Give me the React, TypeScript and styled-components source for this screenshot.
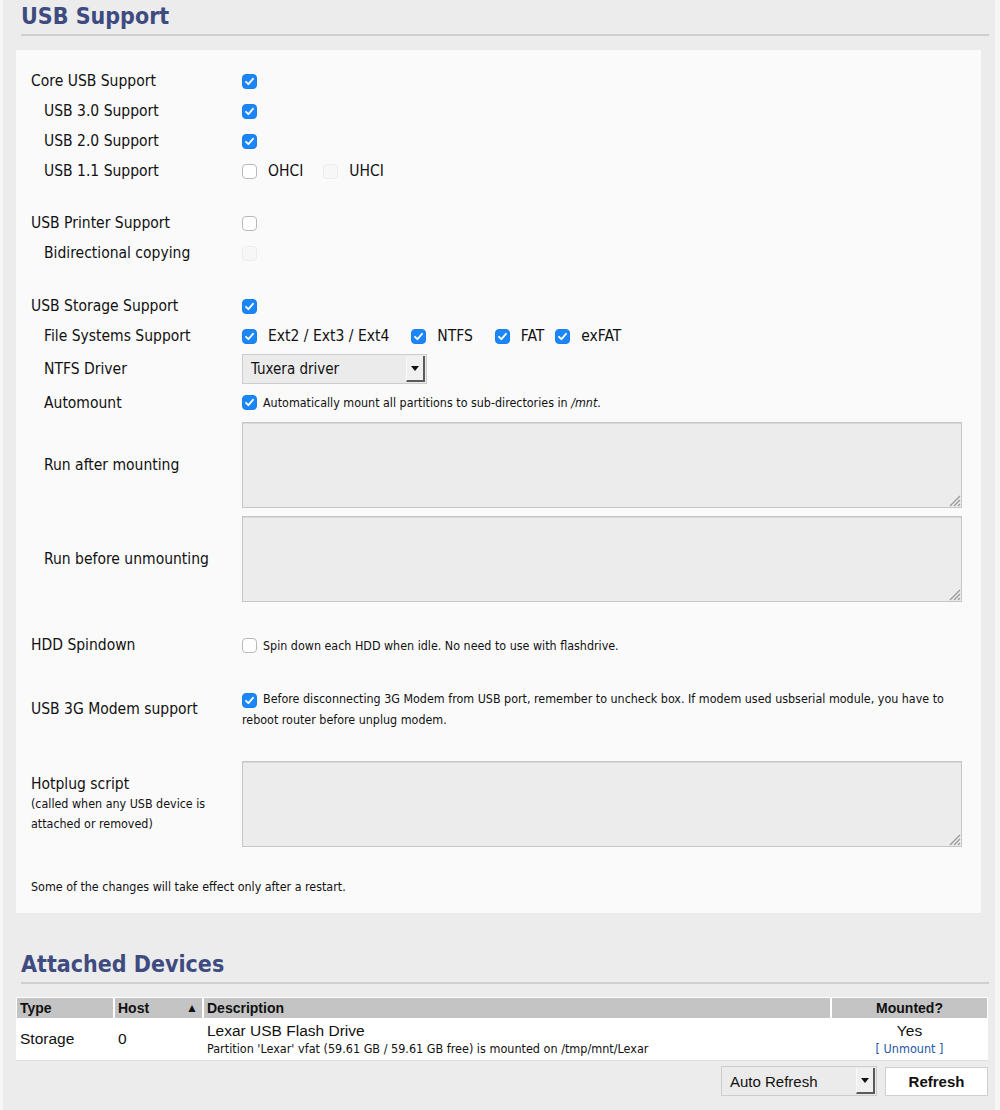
import React from 'react';
import styled, { createGlobalStyle } from 'styled-components';

const Global = createGlobalStyle`
  html, body { margin: 0; padding: 0; background: #f6f6f6; }
  body { font-family: "DejaVu Sans Condensed", "Liberation Sans", sans-serif; color: #111; }
`;

const Page = styled.div`
  margin-left: 3px;
  width: 992px;
  min-height: 1110px;
  background: #ececec;
  overflow: hidden;
`;

const SectionTitle = styled.h2<{ $top: number }>`
  margin: ${(p) => p.$top}px 6px 0 18px;
  padding: 1px 0 3px 0;
  font-family: "DejaVu Sans Condensed", "Liberation Sans", sans-serif;
  font-weight: bold;
  font-size: 23px;
  line-height: 30px;
  color: #3e4b80;
  border-bottom: 2px solid #cfcfcf;
`;

const Panel = styled.div`
  margin: 14px 0 0 13px;
  width: 965px;
  box-sizing: border-box;
  background: #fafafa;
  padding: 16px 0 16px 15px;
`;

const Row = styled.div<{ $h: number; $gap?: number }>`
  display: grid;
  grid-template-columns: 211px 720px;
  align-items: center;
  height: ${(p) => p.$h}px;
  margin-top: ${(p) => p.$gap ?? 0}px;
`;

const Label = styled.div<{ $indent?: boolean }>`
  padding-left: ${(p) => (p.$indent ? 13 : 0)}px;
  font-size: 15.5px;
  line-height: 20px;
`;

const SmallNote = styled.div<{ $span?: boolean }>`
  font-size: 12.4px;
  line-height: 20px;
  grid-column: ${(p) => (p.$span ? '1 / span 2' : 'auto')};
`;

const Value = styled.div`
  display: flex;
  align-items: center;
`;

const Box = styled.span<{ $state: 'on' | 'off' | 'disabled' }>`
  display: inline-flex;
  align-items: center;
  justify-content: center;
  flex: none;
  width: 15px;
  height: 15px;
  box-sizing: border-box;
  border-radius: 4px;
  vertical-align: -3px;
  background: ${(p) => (p.$state === 'on' ? '#1b86f8' : p.$state === 'off' ? '#ffffff' : '#f7f7f7')};
  border: 1px solid ${(p) => (p.$state === 'on' ? '#1a7fee' : p.$state === 'off' ? '#b9b9b9' : '#ececec')};
`;

const Check = ({ on = true, disabled = false }: { on?: boolean; disabled?: boolean }) => (
  <Box $state={on ? 'on' : disabled ? 'disabled' : 'off'}>
    {on && (
      <svg width="11" height="11" viewBox="0 0 11 11">
        <path d="M2 5.8 L4.4 8.2 L9 2.8" stroke="#fff" strokeWidth="1.8" fill="none" strokeLinecap="round" strokeLinejoin="round" />
      </svg>
    )}
  </Box>
);

const Options = styled.div`
  display: flex;
  align-items: center;
`;

const Opt = styled.span<{ $gap?: number }>`
  display: inline-flex;
  align-items: center;
  gap: 11px;
  margin-right: ${(p) => p.$gap ?? 22}px;
  font-size: 15.5px;
`;

const SmallText = styled.span`
  font-size: 12.4px;
  line-height: 21px;
  margin-left: 6px;
`;

const Wrapped = styled.div`
  font-size: 12.4px;
  line-height: 21px;
  width: 716px;
`;

const SelectBox = styled.div<{ $w: number; $font?: string }>`
  display: flex;
  align-items: stretch;
  width: ${(p) => p.$w}px;
  height: 30px;
  box-sizing: border-box;
  background: #ebebeb;
  border: 1px solid #cdcdcd;
  font-family: ${(p) => p.$font ?? 'inherit'};
`;

const SelectText = styled.span`
  flex: 1;
  display: flex;
  align-items: center;
  padding-left: 8px;
  font-size: 15px;
`;

const ArrowBtn = styled.span`
  width: 19px;
  margin: 1px 1px 1px 0;
  box-sizing: border-box;
  display: flex;
  align-items: center;
  justify-content: center;
  background: #f0f0f0;
  border-left: 1px solid #fafafa;
  border-right: 2px solid #5a5a5a;
  border-bottom: 2px solid #5a5a5a;
  &::after {
    content: '';
    border-left: 4px solid transparent;
    border-right: 4px solid transparent;
    border-top: 5px solid #111;
  }
`;

const AreaWrap = styled.div`
  position: relative;
  width: 720px;
  height: 86px;
`;

const TextArea = styled.textarea`
  display: block;
  width: 720px;
  height: 86px;
  box-sizing: border-box;
  background: #ececec;
  border: 1px solid #c6c6c6;
  box-shadow: inset 0 1px 0 #d8d8d8;
  margin: 0;
  resize: none;
`;

const Grip = styled.svg`
  position: absolute;
  right: 1px;
  bottom: 1px;
  pointer-events: none;
`;

const Area = () => (
  <AreaWrap>
    <TextArea defaultValue="" />
    <Grip width="13" height="13" viewBox="0 0 13 13">
      <path d="M12 2 L2 12 M12 6 L6 12 M12 10 L10 12" stroke="#9a9a9a" strokeWidth="1.3" />
    </Grip>
  </AreaWrap>
);

const DevTable = styled.div`
  margin: 13px 0 0 13px;
  width: 972px;
  box-sizing: border-box;
  padding: 1px;
  background: #ffffff;
  box-shadow: 0 1px 0 #dedede;
  display: grid;
  grid-template-columns: 96px 87px 626px 155px;
  column-gap: 2px;
  row-gap: 1px;
  font-family: "Liberation Sans", Arial, sans-serif;
`;

const Th = styled.div<{ $center?: boolean }>`
  height: 20px;
  background: #c4c4c4;
  font-weight: bold;
  font-size: 14px;
  line-height: 20px;
  padding: 0 3px;
  display: flex;
  justify-content: ${(p) => (p.$center ? 'center' : 'space-between')};
`;

const SortMark = styled.span`
  font-size: 12px;
  padding-right: 1px;
`;

const Td = styled.div<{ $center?: boolean }>`
  height: 40px;
  display: flex;
  flex-direction: column;
  justify-content: center;
  align-items: ${(p) => (p.$center ? 'center' : 'flex-start')};
  padding: 0 3px;
  font-size: 15.5px;
`;

const DevName = styled.div`
  font-size: 15.5px;
  line-height: 19px;
`;

const DevSub = styled.div`
  font-family: "DejaVu Sans Condensed", "Liberation Sans", sans-serif;
  font-size: 12.5px;
  line-height: 17px;
`;

const Unmount = styled.a`
  font-family: "DejaVu Sans Condensed", "Liberation Sans", sans-serif;
  font-size: 12.5px;
  line-height: 17px;
  color: #2455a8;
  text-decoration: none;
`;

const Controls = styled.div`
  display: flex;
  justify-content: flex-end;
  align-items: flex-start;
  gap: 8px;
  margin: 6px 7px 0 0;
  font-family: "Liberation Sans", Arial, sans-serif;
`;

const Button = styled.button`
  width: 103px;
  height: 29px;
  margin-top: 1px;
  background: #ffffff;
  border: 1px solid #cfcfcf;
  font-family: "Liberation Sans", Arial, sans-serif;
  font-weight: bold;
  font-size: 15px;
  color: #111;
  padding: 0;
`;

export default function App() {
  return (
    <Page>
      <Global />
      <SectionTitle $top={0}>USB Support</SectionTitle>
      <Panel>
        <Row $h={30}>
          <Label>Core USB Support</Label>
          <Value><Check /></Value>
        </Row>
        <Row $h={30}>
          <Label $indent>USB 3.0 Support</Label>
          <Value><Check /></Value>
        </Row>
        <Row $h={30}>
          <Label $indent>USB 2.0 Support</Label>
          <Value><Check /></Value>
        </Row>
        <Row $h={30}>
          <Label $indent>USB 1.1 Support</Label>
          <Options>
            <Opt $gap={20}><Check on={false} />OHCI</Opt>
            <Opt><Check on={false} disabled />UHCI</Opt>
          </Options>
        </Row>

        <Row $h={30} $gap={22}>
          <Label>USB Printer Support</Label>
          <Value><Check on={false} /></Value>
        </Row>
        <Row $h={30}>
          <Label $indent>Bidirectional copying</Label>
          <Value><Check on={false} disabled /></Value>
        </Row>

        <Row $h={30} $gap={23}>
          <Label>USB Storage Support</Label>
          <Value><Check /></Value>
        </Row>
        <Row $h={30}>
          <Label $indent>File Systems Support</Label>
          <Options>
            <Opt><Check />Ext2 / Ext3 / Ext4</Opt>
            <Opt><Check />NTFS</Opt>
            <Opt $gap={11}><Check />FAT</Opt>
            <Opt><Check />exFAT</Opt>
          </Options>
        </Row>
        <Row $h={36}>
          <Label $indent>NTFS Driver</Label>
          <Value>
            <SelectBox $w={185}>
              <SelectText>Tuxera driver</SelectText>
              <ArrowBtn />
            </SelectBox>
          </Value>
        </Row>
        <Row $h={31}>
          <Label $indent>Automount</Label>
          <Value>
            <Check />
            <SmallText>Automatically mount all partitions to sub-directories in <i>/mnt</i>.</SmallText>
          </Value>
        </Row>
        <Row $h={94}>
          <Label $indent>Run after mounting</Label>
          <Value><Area /></Value>
        </Row>
        <Row $h={94}>
          <Label $indent>Run before unmounting</Label>
          <Value><Area /></Value>
        </Row>

        <Row $h={30} $gap={24}>
          <Label>HDD Spindown</Label>
          <Value>
            <Check on={false} />
            <SmallText>Spin down each HDD when idle. No need to use with flashdrive.</SmallText>
          </Value>
        </Row>

        <Row $h={42} $gap={28}>
          <Label>USB 3G Modem support</Label>
          <Wrapped>
            <Check />
            <SmallText>
              Before disconnecting 3G Modem from USB port, remember to uncheck box. If modem used usbserial module, you have to reboot router before unplug modem.
            </SmallText>
          </Wrapped>
        </Row>

        <Row $h={94} $gap={27}>
          <Label>
            Hotplug script
            <SmallNote>
              (called when any USB device is
              <br />
              attached or removed)
            </SmallNote>
          </Label>
          <Value><Area /></Value>
        </Row>

        <Row $h={20} $gap={26}>
          <SmallNote $span>Some of the changes will take effect only after a restart.</SmallNote>
        </Row>
      </Panel>

      <SectionTitle $top={35}>Attached Devices</SectionTitle>
      <DevTable>
        <Th>Type</Th>
        <Th>Host<SortMark>▲</SortMark></Th>
        <Th>Description</Th>
        <Th $center>Mounted?</Th>
        <Td>Storage</Td>
        <Td>0</Td>
        <Td>
          <DevName>Lexar USB Flash Drive</DevName>
          <DevSub>Partition 'Lexar' vfat (59.61 GB / 59.61 GB free) is mounted on /tmp/mnt/Lexar</DevSub>
        </Td>
        <Td $center>
          <DevName>Yes</DevName>
          <Unmount href="#">[ Unmount ]</Unmount>
        </Td>
      </DevTable>
      <Controls>
        <SelectBox $w={156} $font={'"Liberation Sans", Arial, sans-serif'}>
          <SelectText>Auto Refresh</SelectText>
          <ArrowBtn />
        </SelectBox>
        <Button>Refresh</Button>
      </Controls>
    </Page>
  );
}
